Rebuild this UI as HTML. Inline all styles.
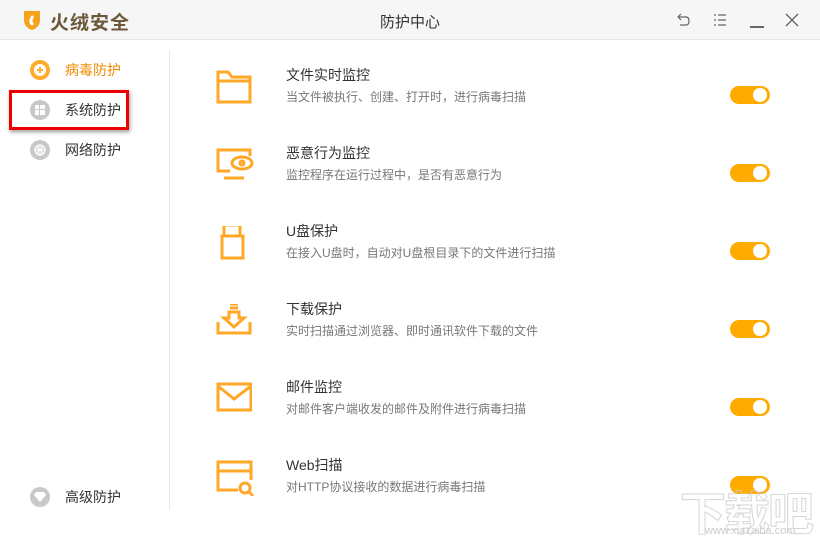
<!DOCTYPE html>
<html><head><meta charset="utf-8"><style>
*{margin:0;padding:0;box-sizing:border-box}
body{width:820px;height:540px;background:#fff;font-family:"Liberation Sans","Noto Sans CJK SC",sans-serif;position:relative;overflow:hidden}
.hdr{position:absolute;left:0;top:0;width:820px;height:40px;background:#f5f6f5;border-bottom:1px solid #e6e6e6}
.logo{position:absolute;left:50px;top:8px;font-size:19px;font-weight:bold;color:#6b5a3a;letter-spacing:1px}
.ttl{position:absolute;left:0;width:820px;text-align:center;top:11px;font-size:15px;color:#333}
.side{position:absolute;left:169px;top:50px;width:1px;height:460px;background:#e8e8e8}
.nav{position:absolute;left:30px;font-size:14px;color:#333}
.nav .ic{position:absolute;left:0;top:0;width:20px;height:20px;border-radius:50%;background:#c8c8c8}
.nav span{position:absolute;left:35px;top:0;white-space:nowrap;line-height:20px}
.row{position:absolute;left:216px;width:560px;height:60px}
.row svg{position:absolute;left:0;top:0}
.row .t{position:absolute;left:70px;top:-5px;font-size:14px;color:#333;white-space:nowrap}
.row .d{position:absolute;left:70px;top:18px;font-size:12px;color:#777;white-space:nowrap}
.tg{position:absolute;left:514px;top:16px;width:40px;height:18px;border-radius:9px;background:#ffab00}
.tg:after{content:"";position:absolute;right:3px;top:2px;width:14px;height:14px;border-radius:50%;background:#fff}
</style></head><body>
<div class="hdr">
<svg style="position:absolute;left:22px;top:9px" width="20" height="22" viewBox="0 0 20 22"><path d="M2 2 L18 2 L18 11 Q18 18 10 21 Q2 18 2 11Z" fill="#f5a21d"/><path d="M10 6 Q6 11 8 15 Q10 18 12 15 Q9 12 12 8Z" fill="#fff"/></svg>
<div class="logo">火绒安全</div>
<div class="ttl">防护中心</div>
<svg style="position:absolute;left:676px;top:12px" width="16" height="16" viewBox="0 0 16 16" fill="none" stroke="#666" stroke-width="1.2"><path d="M5 2 L2 5 L5 8 M2 5 H10 Q13 5 13 9 Q13 13 10 13 H4"/></svg>
<svg style="position:absolute;left:712px;top:12px" width="16" height="16" viewBox="0 0 16 16" stroke="#666" stroke-width="1.2"><path d="M2 3h2M6 3h8M2 8h2M6 8h8M2 13h2M6 13h8"/></svg>
<div style="position:absolute;left:750px;top:26px;width:14px;height:1.5px;background:#666"></div>
<svg style="position:absolute;left:785px;top:13px" width="14" height="14" viewBox="0 0 14 14" stroke="#666" stroke-width="1.3"><path d="M1 1L13 13M13 1L1 13"/></svg>
</div>
<div class="side"></div>
<div class="nav" style="top:60px"><div class="ic" style="background:#ffab2b"></div><div style="position:absolute;left:4px;top:4px;width:12px;height:12px;border-radius:50%;background:#fff"></div><div style="position:absolute;left:7px;top:9px;width:6px;height:2px;background:#ffab2b"></div><div style="position:absolute;left:9px;top:7px;width:2px;height:6px;background:#ffab2b"></div><span style="color:#f08a00">病毒防护</span></div>
<div class="nav" style="top:100px"><div class="ic"></div><svg style="position:absolute;left:5px;top:5px" width="10" height="10" viewBox="0 0 10 10" fill="#fff"><rect x="0" y="0" width="4" height="4"/><rect x="5" y="0" width="5" height="4"/><rect x="0" y="5" width="4" height="5"/><rect x="5" y="5" width="5" height="5"/></svg><span>系统防护</span></div>
<div style="position:absolute;left:9px;top:90px;width:120px;height:40px;border:3px solid #e00;box-shadow:1px 2px 4px rgba(0,0,0,.4)"></div>
<div class="nav" style="top:140px"><div class="ic"></div><svg style="position:absolute;left:4px;top:4px" width="12" height="12" viewBox="0 0 12 12" fill="none" stroke="#fff" stroke-width="1.2"><circle cx="6" cy="6" r="5"/><path d="M1 6H11M6 1V11M3 2Q6 6 3 10M9 2Q6 6 9 10"/></svg><span>网络防护</span></div>
<div class="nav" style="top:487px"><div class="ic"></div><svg style="position:absolute;left:4px;top:5px" width="12" height="10" viewBox="0 0 12 10" fill="#fff"><path d="M2 0H10L12 3L6 10L0 3Z"/></svg><span>高级防护</span></div>

<div class="row" style="top:70px"><svg width="36" height="36" viewBox="0 0 36 36" fill="none" stroke="#ffa726" stroke-width="3"><path d="M2 2H12L16 7H34V32H2Z M2 11H34"/></svg><div class="t">文件实时监控</div><div class="d">当文件被执行、创建、打开时，进行病毒扫描</div><div class="tg"></div></div>
<div class="row" style="top:148px"><svg width="38" height="36" viewBox="0 0 38 36" fill="none" stroke="#ffa726" stroke-width="3"><path d="M14 23H2V2H34V8M8 30H28"/><ellipse cx="26" cy="15" rx="10" ry="6"/><circle cx="26" cy="15" r="2"/></svg><div class="t">恶意行为监控</div><div class="d">监控程序在运行过程中，是否有恶意行为</div><div class="tg"></div></div>
<div class="row" style="top:226px"><svg width="36" height="36" viewBox="0 0 36 36" fill="none" stroke="#ffa726" stroke-width="3"><rect x="8" y="-1" width="16" height="11"/><rect x="6" y="10" width="21" height="22"/></svg><div class="t">U盘保护</div><div class="d">在接入U盘时，自动对U盘根目录下的文件进行扫描</div><div class="tg"></div></div>
<div class="row" style="top:304px"><svg width="36" height="36" viewBox="0 0 36 36" fill="none" stroke="#ffa726" stroke-width="3"><path d="M2 18V29H34V18M14 0H22M14 4H22M13 8H23V14H28L18 23L8 14H13Z"/></svg><div class="t">下载保护</div><div class="d">实时扫描通过浏览器、即时通讯软件下载的文件</div><div class="tg"></div></div>
<div class="row" style="top:382px"><svg width="36" height="36" viewBox="0 0 36 36" fill="none" stroke="#ffa726" stroke-width="3"><rect x="2" y="2" width="33" height="26"/><path d="M2 4L18 17L35 4"/></svg><div class="t">邮件监控</div><div class="d">对邮件客户端收发的邮件及附件进行病毒扫描</div><div class="tg"></div></div>
<div class="row" style="top:460px"><svg width="40" height="36" viewBox="0 0 40 36" fill="none" stroke="#ffa726" stroke-width="3"><path d="M22 30H2V2H35V20M2 11H35"/><circle cx="29" cy="28" r="5"/><path d="M33 32L37 36"/></svg><div class="t">Web扫描</div><div class="d">对HTTP协议接收的数据进行病毒扫描</div><div class="tg"></div></div>
<div style="position:absolute;left:680px;top:478px;font-size:46px;font-weight:bold;color:transparent;-webkit-text-stroke:1px #ccc;opacity:.8;letter-spacing:-2px">下载吧</div>
<div style="position:absolute;left:705px;top:525px;font-size:11px;color:#ccc">www.xiazaiba.com</div>
</body></html>
